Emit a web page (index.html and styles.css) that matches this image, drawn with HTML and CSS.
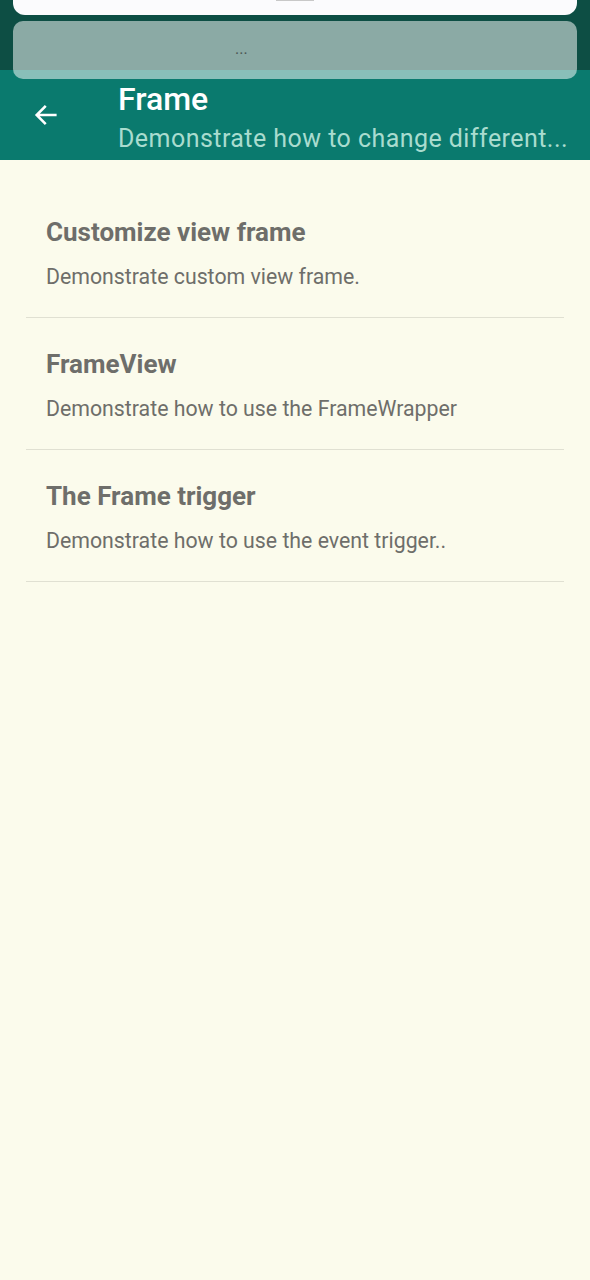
FILE: index.html
```html
<!DOCTYPE html>
<html>
<head>
<meta charset="utf-8">
<link rel="stylesheet" href="styles.css">
</head>
<body>
<div class="top">
  <div class="sheet"><div class="handle"></div></div>
  <div class="peek"><span class="dots">...</span></div>
</div>
<header class="appbar">
  <div class="back">
    <svg width="28" height="28" viewBox="0 0 24 24"><path d="M20 12H4.5M11 5l-7 7 7 7" fill="none" stroke="#ffffff" stroke-width="2.2" stroke-linecap="square"/></svg>
  </div>
  <div class="titles">
    <div class="title">Frame</div>
    <div class="subtitle">Demonstrate how to change different...</div>
  </div>
</header>
<main class="list">
  <div class="item">
    <div class="item-title">Customize view frame</div>
    <div class="item-desc">Demonstrate custom view frame.</div>
  </div>
  <div class="item">
    <div class="item-title">FrameView</div>
    <div class="item-desc">Demonstrate how to use the FrameWrapper</div>
  </div>
  <div class="item">
    <div class="item-title">The Frame trigger</div>
    <div class="item-desc">Demonstrate how to use the event trigger..</div>
  </div>
</main>
</body>
</html>
```
FILE: styles.css
```css
html, body {
  margin: 0;
  padding: 0;
}
body {
  width: 590px;
  height: 1280px;
  background: #fbfbec;
  font-family: Roboto, "Noto Sans", sans-serif;
  overflow: hidden;
}
.top {
  background: #0d4e44;
  padding: 0 13px;
  height: 70px;
  display: flex;
  flex-direction: column;
  gap: 6px;
  position: relative;
  z-index: 2;
}
.sheet {
  height: 15px;
  flex-shrink: 0;
  background: #fbfbfd;
  border-radius: 0 0 12px 12px;
  display: flex;
  justify-content: center;
}
.handle {
  width: 38px;
  height: 1px;
  background: #c8c8c8;
}
.peek {
  height: 58px;
  flex-shrink: 0;
  background: rgba(255, 255, 255, 0.52);
  border-radius: 10px;
  display: flex;
  align-items: center;
  padding-left: 222px;
}
.dots {
  color: #4c5654;
  font-size: 16px;
  line-height: 1;
  margin-top: -2px;
}
.appbar {
  background: #0a7a6e;
  height: 90px;
  display: flex;
  align-items: flex-start;
  position: relative;
  z-index: 1;
}
.back {
  width: 118px;
  flex-shrink: 0;
  display: flex;
  padding: 31px 0 0 32px;
  box-sizing: border-box;
}
.titles {
  flex: 1;
  min-width: 0;
  padding: 10px 16px 0 0;
  display: flex;
  flex-direction: column;
  gap: 5px;
}
.title {
  color: #ffffff;
  font-size: 32px;
  font-weight: 500;
  line-height: 38px;
}
.subtitle {
  color: #a9dccf;
  font-size: 25px;
  letter-spacing: 0.45px;
  line-height: 32px;
  white-space: nowrap;
}
.list {
  padding: 0 26px;
  margin-top: 26px;
}
.item {
  padding: 30px 20px 0;
  height: 101px;
  border-bottom: 1px solid #e0e0d2;
}
.item-title {
  color: #6e6e6a;
  font-size: 26px;
  font-weight: 700;
  line-height: 32px;
}
.item-desc {
  color: #6e6e6a;
  font-size: 21.3px;
  line-height: 28px;
  margin-top: 15px;
}
```
